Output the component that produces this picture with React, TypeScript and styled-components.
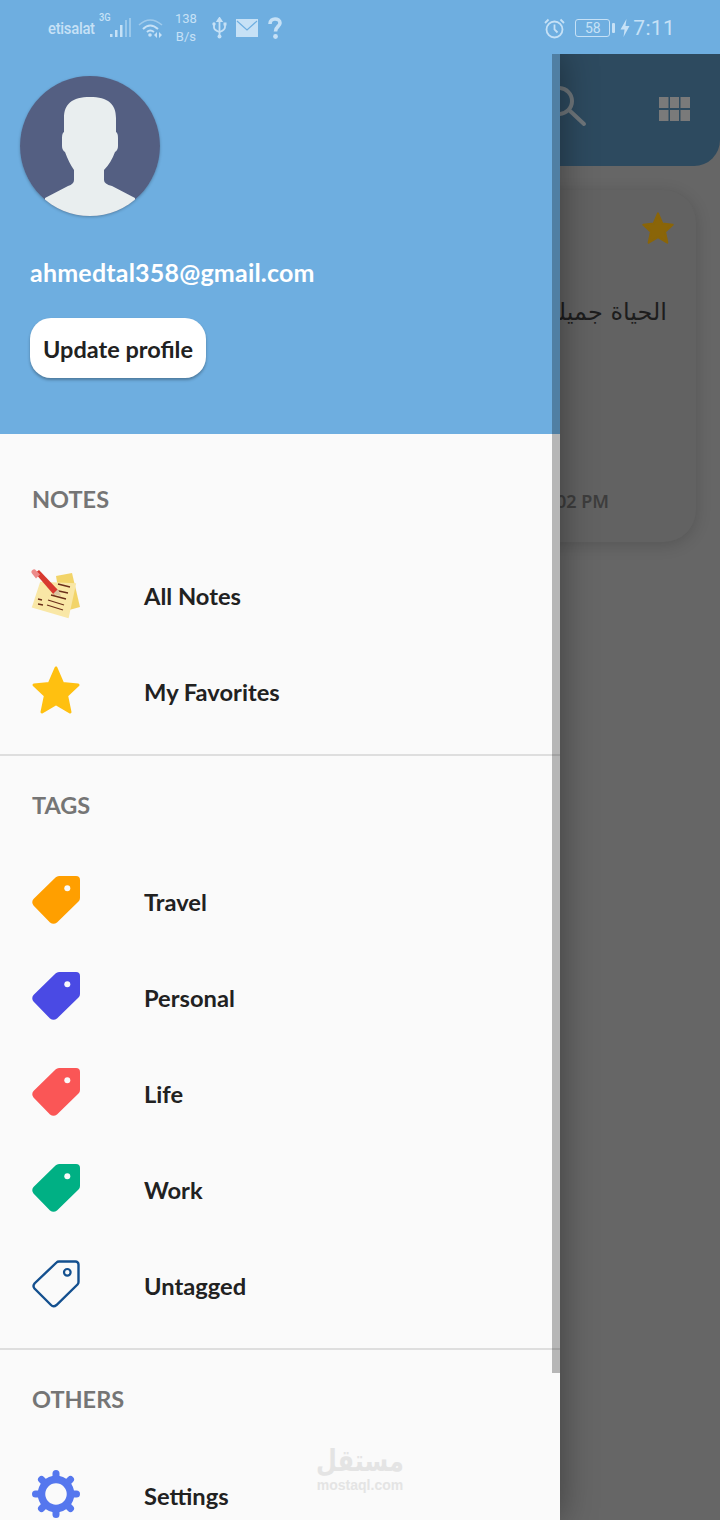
import styled, { createGlobalStyle } from "styled-components";

const Global = createGlobalStyle`
  html, body {
    margin: 0;
    padding: 0;
    background: #666;
    overflow: hidden;
  }
  * {
    box-sizing: border-box;
  }
`;

const Screen = styled.div`
  width: 720px;
  height: 1520px;
  display: flex;
  flex-direction: column;
  overflow: hidden;
  font-family: "Lato", "Liberation Sans", sans-serif;
`;

const StatusBar = styled.div`
  position: relative;
  z-index: 3;
  height: 54px;
  flex: none;
  display: flex;
  align-items: center;
  justify-content: space-between;
  padding: 2px 45px 0 48px;
  background: #6eaee0;
  color: #c6e1f6;
`;
const StatusGroup = styled.div`
  display: flex;
  align-items: center;
`;
const Carrier = styled.span`
  font-family: "Roboto", sans-serif;
  font-size: 17px;
  font-weight: 500;
  letter-spacing: -0.3px;
  transform: scaleX(0.87);
  transform-origin: left center;
  width: 50px;
`;
const NetType = styled.span`
  font-family: "Roboto", sans-serif;
  font-size: 11px;
  font-weight: 500;
  align-self: flex-start;
  margin: 1px 0 0 1px;
  width: 11px;
  transform: scaleX(0.85);
  transform-origin: left center;
`;
const Speed = styled.div`
  display: flex;
  flex-direction: column;
  align-items: center;
  font-family: "Roboto", sans-serif;
  font-size: 13px;
  line-height: 18px;
  margin: 0 15px 0 11px;
`;
const BatteryBox = styled.div`
  width: 35px;
  height: 18px;
  border: 1px solid #c6e1f6;
  border-radius: 3px;
  margin-left: 10px;
  font-family: "Roboto", sans-serif;
  font-size: 14px;
  line-height: 16px;
  text-align: center;
`;
const BatteryTip = styled.div`
  width: 3px;
  height: 10px;
  margin-left: 2px;
  background: #c6e1f6;
  border-radius: 1px;
`;
const Clock = styled.span`
  font-family: "Roboto", sans-serif;
  font-size: 21px;
  letter-spacing: 0.3px;
  margin-left: 3px;
`;

const Body = styled.div`
  flex: 1;
  display: flex;
  min-height: 0;
`;

const Drawer = styled.aside`
  width: 560px;
  flex: none;
  position: relative;
  z-index: 2;
  background: #fafafa;
  box-shadow: 0 0 34px rgba(0, 0, 0, 0.4);
  overflow: hidden;
`;
const ScrollThumb = styled.div`
  position: absolute;
  top: 0;
  right: 0;
  width: 8px;
  height: 1319px;
  background: rgba(0, 0, 0, 0.27);
`;
const Profile = styled.header`
  height: 380px;
  background: #6eaee0;
  padding: 22px 0 0 20px;
`;
const Avatar = styled.svg`
  display: block;
  width: 140px;
  height: 140px;
  border-radius: 50%;
  box-shadow: 0 1px 3px rgba(0, 0, 0, 0.25);
`;
const Email = styled.div`
  margin: 40px 0 0 10px;
  color: #fff;
  font-size: 25px;
  font-weight: 700;
  letter-spacing: 0.2px;
  line-height: 32px;
`;
const UpdateButton = styled.button`
  display: block;
  width: 176px;
  height: 60px;
  margin: 30px 0 0 10px;
  padding: 2px 0 0;
  border: none;
  border-radius: 21px;
  background: #fff;
  color: #212121;
  font-family: inherit;
  font-size: 23.5px;
  font-weight: 700;
  box-shadow: 0 2px 3px rgba(0, 0, 0, 0.3);
`;

const Section = styled.section<{ $first?: boolean; $last?: boolean }>`
  padding: ${(p) => (p.$first ? "42px" : "26px")} 0 16px;
  border-bottom: ${(p) => (p.$last ? "none" : "2px solid #dedede")};
`;
const SectionTitle = styled.h2`
  margin: 0 0 24px 32px;
  color: #757575;
  font-size: 23.5px;
  font-weight: 700;
  line-height: 46px;
`;
const Row = styled.div`
  height: 96px;
  display: flex;
  align-items: center;
  gap: 64px;
  padding-left: 32px;
`;
const RowIcon = styled.svg`
  width: 48px;
  height: 48px;
  flex: none;
  overflow: visible;
`;
const RowLabel = styled.span`
  margin-top: 4px;
  color: #212121;
  font-size: 23.7px;
  font-weight: 700;
`;

const Watermark = styled.div`
  position: absolute;
  left: 316px;
  top: 1390px;
  width: 88px;
  display: flex;
  flex-direction: column;
  align-items: center;
  color: #e4e4e4;
`;
const WatermarkArabic = styled.span`
  font-family: "DejaVu Sans", sans-serif;
  font-size: 24px;
  font-weight: 700;
  line-height: 34px;
  transform: scaleY(1.25);
`;
const WatermarkLatin = styled.span`
  font-family: "Liberation Sans", sans-serif;
  font-size: 14px;
  font-weight: 700;
  line-height: 14px;
`;

const Behind = styled.main`
  flex: 1;
  min-width: 0;
  overflow: hidden;
  background: #666;
`;
const BehindInner = styled.div`
  width: 720px;
  margin-left: -560px;
`;
const AppBar = styled.div`
  height: 112px;
  display: flex;
  align-items: center;
  justify-content: flex-end;
  gap: 69px;
  padding: 0 30px 8px 0;
  background: #2d4a5f;
  border-bottom-right-radius: 26px;
`;
const BarIcon = styled.svg`
  flex: none;
  display: block;
`;
const GridIcon = styled(BarIcon)`
  margin-top: 6px;
`;
const Card = styled.article`
  height: 352px;
  margin: 24px 24px 0;
  padding: 22px 22px 0 0;
  display: flex;
  flex-direction: column;
  align-items: flex-end;
  background: #626262;
  border-radius: 32px;
  box-shadow: 0 3px 16px rgba(0, 0, 0, 0.16);
`;
const NoteText = styled.div`
  margin: 50px 7px 0 0;
  color: #1d1d1d;
  font-family: "DejaVu Sans", "Noto Sans", sans-serif;
  font-size: 24px;
  line-height: 36px;
  white-space: nowrap;
  direction: rtl;
`;
const NoteDate = styled.div`
  margin: 159px 65px 0 0;
  color: #3d3d3d;
  font-family: "Noto Sans", sans-serif;
  font-size: 18px;
  font-weight: 600;
  line-height: 24px;
  white-space: nowrap;
`;

const TAG_PATH =
  "M23.5 1.5Q25 0 27 0H44A4 4 0 0 1 48 4V22Q48 24 46.5 25.5L25 46.5Q21.5 49 18 46.5L1.5 29.5Q-1 26 1.5 23Z";
const STAR_PATH = "M24 2L30.6 17.4 46 19 34.6 29.6 38 46 24 37.6 10 46 13.4 29.6 2 19 17.4 17.4Z";

const TagIcon = ({ color }: { color: string }) => (
  <RowIcon viewBox="0 0 48 48">
    <path d={TAG_PATH} fill={color} />
    <circle cx="35.3" cy="12.3" r="3" fill="#fafafa" />
  </RowIcon>
);

const tags = [
  { name: "Travel", color: "#ff9f00" },
  { name: "Personal", color: "#4a4ae4" },
  { name: "Life", color: "#fa5656" },
  { name: "Work", color: "#00b084" },
];

const gearAngles = [0, 45, 90, 135, 180, 225, 270, 315];

export default function App() {
  return (
    <Screen>
      <Global />
      <StatusBar>
        <StatusGroup>
          <Carrier>etisalat</Carrier>
          <NetType>3G</NetType>
          <svg width="22" height="22" viewBox="0 0 22 22" fill="#c6e1f6">
            <rect x="0" y="17" width="2.5" height="3" />
            <rect x="5" y="13" width="2.5" height="7" />
            <rect x="10" y="8" width="2.5" height="12" />
            <rect x="15" y="3" width="2" height="17" opacity="0.5" />
            <rect x="19" y="1" width="2" height="19" opacity="0.5" />
          </svg>
          <svg width="26" height="22" viewBox="0 0 26 22" fill="none" style={{ marginLeft: 6 }} stroke="#c6e1f6">
            <path d="M1 8Q12 -2 24 8" strokeWidth="1.6" opacity="0.55" />
            <path d="M5 12Q12 5 20 12" strokeWidth="2" />
            <path d="M9 15Q12 12 16 15" strokeWidth="2" />
            <circle cx="12" cy="18" r="1.8" fill="#c6e1f6" stroke="none" />
            <path d="M19 15v6l-3-3zM21 15v6l3-3z" fill="#c6e1f6" stroke="none" />
          </svg>
          <Speed>
            <span>138</span>
            <span>B/s</span>
          </Speed>
          <svg width="15" height="22" viewBox="0 0 15 22" fill="none" stroke="#c6e1f6" strokeWidth="1.8">
            <path d="M7.5 2V20" />
            <path d="M2 8V10.5Q2 13 7.5 15Q13 13 13 10V8" />
            <path d="M5.5 4L7.5 1 9.5 4Z" fill="#c6e1f6" />
            <circle cx="7.5" cy="19.5" r="2" fill="#c6e1f6" stroke="none" />
            <circle cx="2" cy="7" r="1.7" fill="#c6e1f6" stroke="none" />
            <rect x="11.5" y="5.5" width="3" height="3" fill="#c6e1f6" stroke="none" />
          </svg>
          <svg width="22" height="18" viewBox="0 0 22 18" style={{ marginLeft: 9 }}>
            <path d="M0 0H22V18H0Z" fill="#c6e1f6" />
            <path d="M1 2L11 11 21 2" fill="none" stroke="#6eaee0" strokeWidth="1.2" />
          </svg>
          <svg width="14" height="22" viewBox="0 0 14 22" fill="none" style={{ marginLeft: 10 }}>
            <path d="M2 7C2 3.5 4.5 2 7 2S12 3.5 12 6C12 9.5 7.5 9.5 7.5 14.5" stroke="#c6e1f6" strokeWidth="3.6" />
            <circle cx="7.5" cy="19.5" r="2.4" fill="#c6e1f6" />
          </svg>
        </StatusGroup>
        <StatusGroup>
          <svg width="21" height="21" viewBox="0 0 21 21" fill="none" stroke="#c6e1f6" strokeWidth="1.8">
            <circle cx="10.5" cy="11.5" r="8" />
            <path d="M10.5 6.5V11.5L13.5 14.5" />
            <path d="M1 5L4.5 1.5M20 5L16.5 1.5" />
          </svg>
          <BatteryBox>58</BatteryBox>
          <BatteryTip />
          <svg width="10" height="18" viewBox="0 0 10 18" fill="#c6e1f6" style={{ marginLeft: 5 }}>
            <path d="M6.5 0L0.5 10.5H4.5L3.5 18 9.5 7H5.5Z" />
          </svg>
          <Clock>7:11</Clock>
        </StatusGroup>
      </StatusBar>

      <Body>
        <Drawer>
          <Profile>
            <Avatar viewBox="0 0 140 140">
              <rect width="140" height="140" fill="#545f82" />
              <path
                d="M70 21C52 21 44 28 44 42V56Q42 57 42 62V70Q42 74 45 76Q49 87 54 94V104Q54 108 48 110L25 122V140H115V122L92 110Q84 108 84 104V94Q91 87 95 76Q98 74 98 70V62Q98 57 96 56V42C96 28 88 21 70 21Z"
                fill="#e9eeef"
              />
            </Avatar>
            <Email>ahmedtal358@gmail.com</Email>
            <UpdateButton>Update profile</UpdateButton>
          </Profile>

          <Section $first>
            <SectionTitle>NOTES</SectionTitle>
            <Row>
              <RowIcon viewBox="0 0 48 48">
                <path d="M24 6L40 3 48 37 30 42Z" fill="#f2d469" />
                <path d="M8 12L44 13 37 48 0 38Z" fill="#f9e7a6" transform="rotate(1 24 24)" />
                <g stroke="#6b2f1a" strokeWidth="1.3">
                  <path d="M26 14L38 17M22 20L36 23M19 25L34 29M16 30L32 35M15 35L31 40M6 29L10 30M6 34L11 35" />
                </g>
                <path d="M3 3L7 0 26 20 22 25Z" fill="#d8392f" />
                <path d="M0 3.5A2.5 2.5 0 0 1 4 0.5L8 4.5 4 8.5Z" fill="#ec8a8a" />
                <path d="M21 24L26 19 29 26Z" fill="#d9c3a0" />
              </RowIcon>
              <RowLabel>All Notes</RowLabel>
            </Row>
            <Row>
              <RowIcon viewBox="0 0 48 48">
                <path d={STAR_PATH} fill="#ffc010" stroke="#ffc010" strokeWidth="3" strokeLinejoin="round" />
              </RowIcon>
              <RowLabel>My Favorites</RowLabel>
            </Row>
          </Section>

          <Section>
            <SectionTitle>TAGS</SectionTitle>
            {tags.map((tag) => (
              <Row key={tag.name}>
                <TagIcon color={tag.color} />
                <RowLabel>{tag.name}</RowLabel>
              </Row>
            ))}
            <Row>
              <RowIcon viewBox="0 0 48 48">
                <path
                  d="M24.5 2.5Q25.5 1.5 27 1.5H43.5A3 3 0 0 1 46.5 4.5V22Q46.5 23.5 45.5 24.5L24.5 45Q21.5 47.5 19 45L2.5 28.5Q0.5 26 2.5 23.5Z"
                  fill="none"
                  stroke="#14508f"
                  strokeWidth="2.4"
                />
                <circle cx="35.3" cy="12.3" r="3.3" fill="none" stroke="#14508f" strokeWidth="2.2" />
              </RowIcon>
              <RowLabel>Untagged</RowLabel>
            </Row>
          </Section>

          <Section $last>
            <SectionTitle>OTHERS</SectionTitle>
            <Row>
              <RowIcon viewBox="0 0 48 48">
                <circle cx="24" cy="24" r="14.5" fill="none" stroke="#5577ee" strokeWidth="7.5" />
                {gearAngles.map((a) => (
                  <line
                    key={a}
                    x1="24"
                    y1="7"
                    x2="24"
                    y2="3.5"
                    stroke="#5577ee"
                    strokeWidth="7"
                    strokeLinecap="round"
                    transform={`rotate(${a} 24 24)`}
                  />
                ))}
              </RowIcon>
              <RowLabel>Settings</RowLabel>
            </Row>
          </Section>

          <ScrollThumb />
          <Watermark>
            <WatermarkArabic>مستقل</WatermarkArabic>
            <WatermarkLatin>mostaql.com</WatermarkLatin>
          </Watermark>
        </Drawer>

        <Behind>
          <BehindInner>
            <AppBar>
              <BarIcon width="48" height="48" viewBox="0 0 48 48" fill="none" stroke="#6f767b" strokeWidth="4">
                <circle cx="17" cy="19" r="13" />
                <path d="M27 28L42 42" strokeLinecap="round" />
              </BarIcon>
              <GridIcon width="31" height="24" viewBox="0 0 31 24" fill="#7a7a7a">
                <rect x="0" y="0" width="9.5" height="11" />
                <rect x="11" y="0" width="9" height="11" />
                <rect x="21.5" y="0" width="9.5" height="11" />
                <rect x="0" y="13" width="9.5" height="11" />
                <rect x="11" y="13" width="9" height="11" />
                <rect x="21.5" y="13" width="9.5" height="11" />
              </GridIcon>
            </AppBar>
            <Card>
              <BarIcon width="32" height="32" viewBox="0 0 48 48">
                <path d={STAR_PATH} fill="#8a6508" stroke="#8a6508" strokeWidth="3" strokeLinejoin="round" />
              </BarIcon>
              <NoteText>الحياة جميلة جدا مع الاصدقاء</NoteText>
              <NoteDate>12:02 PM</NoteDate>
            </Card>
          </BehindInner>
        </Behind>
      </Body>
    </Screen>
  );
}
